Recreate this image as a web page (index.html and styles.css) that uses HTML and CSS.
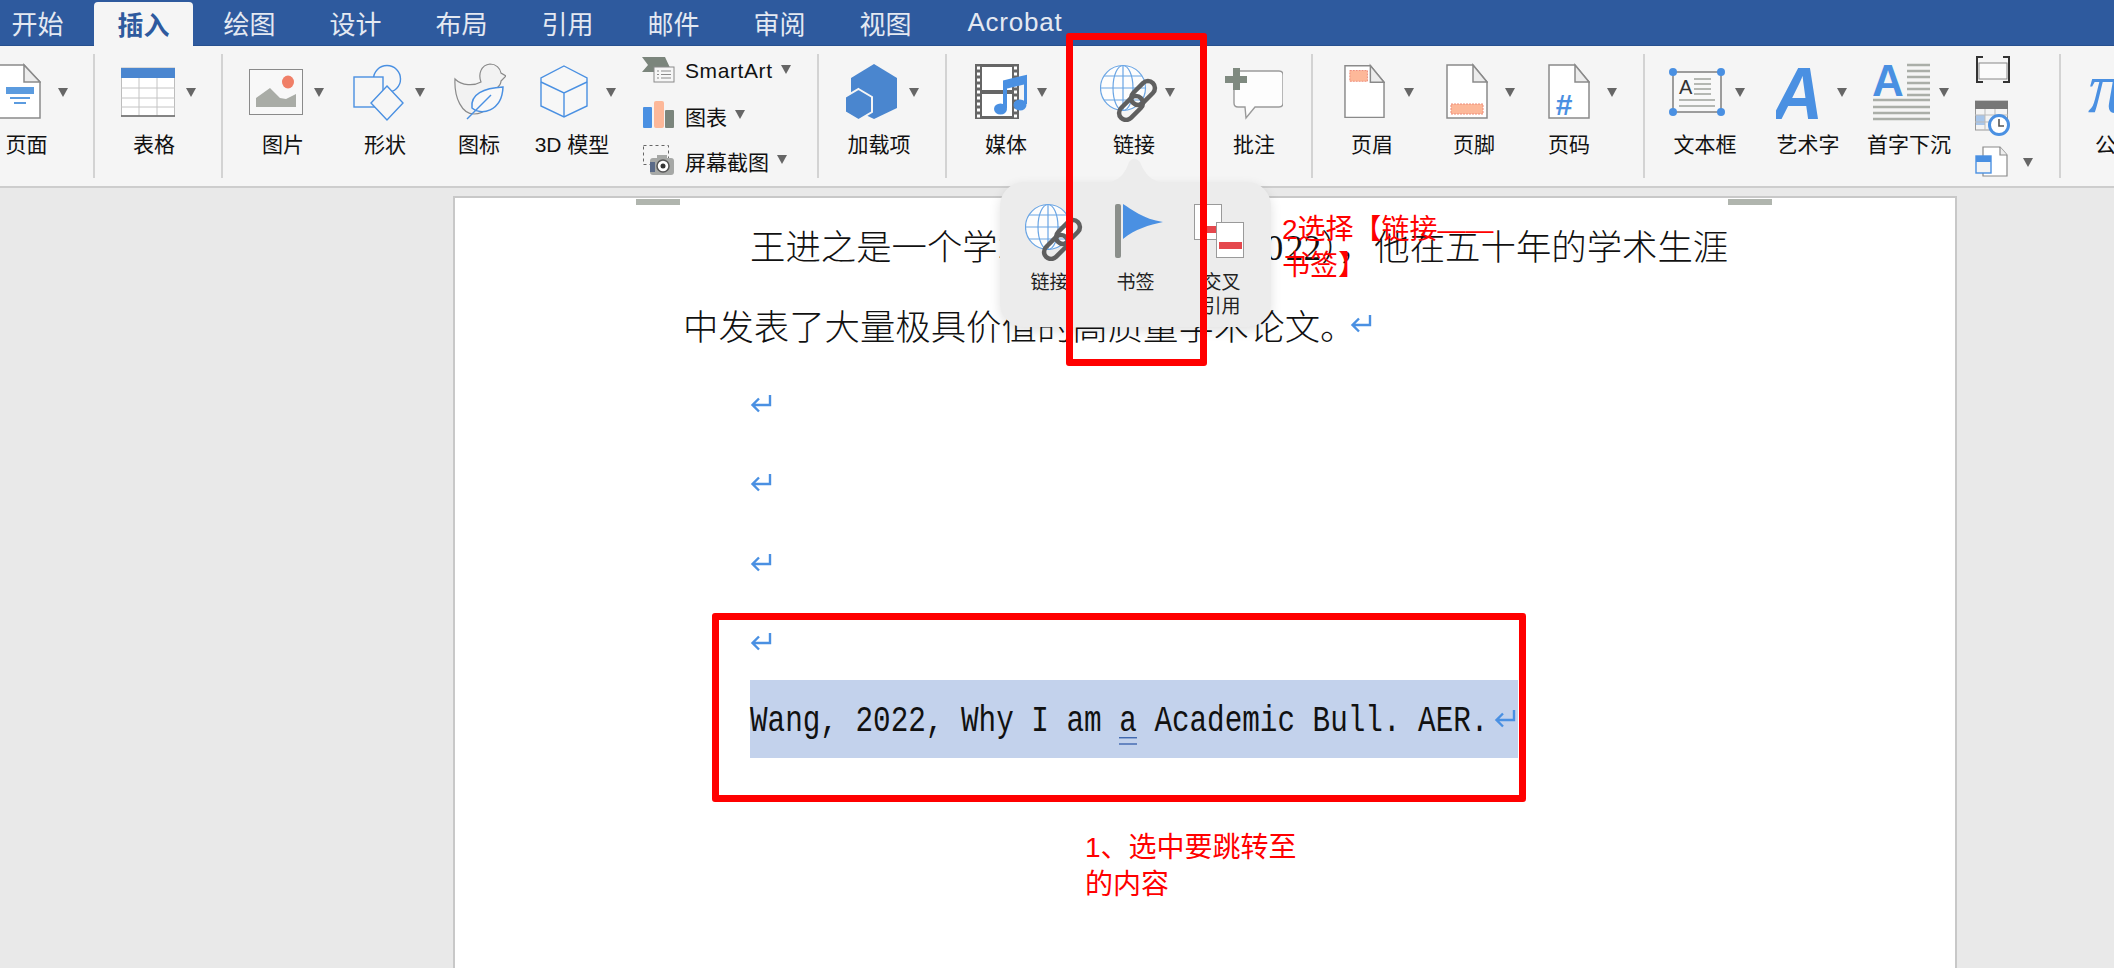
FILE: index.html
```html
<!DOCTYPE html>
<html lang="zh-CN">
<head>
<meta charset="utf-8">
<title>Word 插入 链接</title>
<link rel="stylesheet" href="styles.css">
</head>
<body>
<svg class="defs" width="0" height="0">
  <defs>
    <symbol id="ret" viewBox="0 0 22 20"><path d="M20 1V11H3M9 4.500L2.500 11L9 17.500" fill="none" stroke="#4a90e2" stroke-width="2.400"/></symbol>
    <symbol id="doc" viewBox="0 0 42 60"><path d="M1 3H27L41 20V56H1Z" fill="#fff" stroke="#8a8a8a" stroke-width="1.500"/><path d="M27 3V20H41Z" fill="#ececec" stroke="#8a8a8a" stroke-width="1.500"/></symbol>
    <symbol id="chain" viewBox="0 0 58 60"><g fill="none" stroke="#5f5f5f" stroke-width="4.500"><rect x="36" y="17" width="14" height="28" rx="7" transform="rotate(45 43 31)"/><rect x="24" y="32" width="14" height="28" rx="7" transform="rotate(45 31 46)"/></g></symbol>
    <symbol id="globe" viewBox="0 0 58 60"><g fill="#fdfdfd" stroke="#6aa5e4" stroke-width="1.200"><circle cx="23" cy="26" r="22.500"/><ellipse cx="23" cy="26" rx="10" ry="22.500"/><path d="M23 3.500V48.500M.5 26H45.500M4 14H42M4 38H42" fill="none"/></g></symbol>
  </defs>
</svg>
<div class="app">
  <nav class="tabs">
    <div class="tab">开始</div>
    <div class="tab tab-on">插入</div>
    <div class="tab">绘图</div>
    <div class="tab">设计</div>
    <div class="tab">布局</div>
    <div class="tab">引用</div>
    <div class="tab">邮件</div>
    <div class="tab">审阅</div>
    <div class="tab">视图</div>
    <div class="tab tab-wide">Acrobat</div>
  </nav>

  <section class="ribbon">
    <div class="item w133"><div class="row pl27 g17">
      <svg width="54" height="60" viewBox="0 0 54 60"><path d="M1 3H37L53 20V56H1Z" fill="#fff" stroke="#8a8a8a" stroke-width="1.500"/><path d="M37 3V20H53Z" fill="#ececec" stroke="#8a8a8a" stroke-width="1.500"/><path d="M19 25H47V32H19Z" fill="#5b9bdf"/><path d="M23 35H43V37H23ZM27 40H39V42H27Z" fill="#5b9bdf"/></svg>
      <i class="caret"></i></div><div class="label">页面</div></div>
    <i class="sep"></i>

    <div class="item w118"><div class="row pl26 g11">
      <svg width="54" height="60" viewBox="0 0 54 60"><rect x="0.500" y="6" width="53" height="48" fill="#fff" stroke="#bdbdbd"/><rect y="6" width="54" height="10" fill="#4a86d0"/><path d="M0 26H54M0 36H54M0 45H54M18 16V54M36 16V54" stroke="#c4c4c4" fill="none"/><path d="M0 54H54" stroke="#666" stroke-width="1.500"/></svg>
      <i class="caret"></i></div><div class="label">表格</div></div>
    <i class="sep ml8"></i>

    <div class="item w120"><div class="row pl26 g11">
      <svg width="54" height="60" viewBox="0 0 54 60"><rect x="0.500" y="7.500" width="53" height="45" fill="#f8f8f8" stroke="#8a8a8a"/><polygon points="7,45 7,36 21,26 31,36 37,37 47,32 47,45" fill="#a9aca6"/><ellipse cx="39" cy="20" rx="6" ry="6.500" fill="#f07f67"/></svg>
      <i class="caret"></i></div><div class="label">图片</div></div>

    <div class="item w84"><div class="row pl10 g11">
      <svg width="51" height="60" viewBox="0 0 51 60"><g fill="#f6f6f6" stroke="#4a90e2" stroke-width="1.400"><circle cx="34" cy="17" r="13.500"/><rect x="1" y="15" width="29" height="30"/><polygon points="34,24 50,41 34,58 18,41"/></g></svg>
      <i class="caret"></i></div><div class="label">形状</div></div>

    <div class="item w104"><div class="row pl27">
      <svg width="52" height="60" viewBox="0 0 52 60"><path d="M1 17C8 24 20 24 27 20C24 12 27 3 36 2C42 2 46 6 47 11L52 14L47 19C47 23 44 25 42 27C40 44 30 52 20 52C8 52 0 36 1 17Z" fill="#f2f2f2" stroke="#8a8a8a" stroke-width="1.200"/><path d="M49 25C30 26 16 32 18 46C26 54 48 50 49 25Z" fill="#f8f8f8" stroke="#4a90e2" stroke-width="1.500"/><path d="M13 57L37 33" stroke="#4a90e2" stroke-width="1.500" fill="none"/></svg>
      </div><div class="label">图标</div></div>

    <div class="item w82"><div class="row pl9 g18">
      <svg width="48" height="60" viewBox="0 0 48 60"><g fill="#f7f7f7" stroke="#4a90e2" stroke-width="1.400"><polygon points="24,4 47,16 47,44 24,55 1,44 1,16"/><path d="M1 20L24 31L47 20M24 31V55" fill="none"/></g></svg>
      <i class="caret"></i></div><div class="label">3D 模型</div></div>

    <div class="stack w204">
      <div class="srow">
        <svg width="34" height="34" viewBox="0 0 34 34"><polygon points="1,3 24,3 31,18 1,18 7,11" fill="#7b857c"/><rect x="13" y="13" width="20" height="15" fill="#f6f6f6" stroke="#8a8a8a"/><path d="M16 17H18M20 17H30M16 20.500H18M20 20.500H30M16 24H18M20 24H30" stroke="#8a8a8a" stroke-width="1.200"/></svg>
        <span class="stext stext-latin">SmartArt</span><i class="caret sc"></i>
      </div>
      <div class="srow">
        <svg width="34" height="34" viewBox="0 0 34 34"><rect x="2" y="8" width="9" height="21" rx="1" fill="#4a90e2"/><rect x="13" y="2" width="10" height="27" rx="2" fill="#fdb899"/><rect x="24" y="11" width="9" height="18" rx="1" fill="#7b857c"/></svg>
        <span class="stext">图表</span><i class="caret sc"></i>
      </div>
      <div class="srow">
        <svg width="34" height="34" viewBox="0 0 34 34"><rect x="2.500" y="1.500" width="25" height="19" fill="none" stroke="#666" stroke-dasharray="3 3"/><rect x="9" y="14" width="24" height="17" rx="3" fill="#a6a8a6"/><rect x="16" y="11" width="10" height="4" fill="#a6a8a6"/><circle cx="22" cy="22" r="6" fill="#fff" stroke="#555" stroke-width="1.500"/><circle cx="22" cy="22" r="2.500" fill="#333"/><rect x="9" y="18" width="5" height="10" fill="#5a6a88"/></svg>
        <span class="stext">屏幕截图</span><i class="caret sc"></i>
      </div>
    </div>
    <i class="sep"></i>

    <div class="item w120"><div class="row pl26 g12">
      <svg width="52" height="60" viewBox="0 0 52 60"><polygon points="29,2 52,16 52,46 29,57 6,46 6,16" fill="#4a86cf"/><polygon points="13.500,27 27,35 27,50 13.500,58 0,50 0,35" fill="#4a86cf" stroke="#f5f5f5" stroke-width="2"/></svg>
      <i class="caret"></i></div><div class="label">加载项</div></div>
    <i class="sep ml6"></i>

    <div class="item w118"><div class="row pl28 g10">
      <svg width="52" height="60" viewBox="0 0 52 60"><rect y="2" width="44" height="55" fill="#666"/><rect x="7" y="5" width="30" height="23" fill="#fff"/><rect x="7" y="32" width="30" height="22" fill="#fff"/><path d="M2 6H5M2 12H5M2 18H5M2 24H5M2 30H5M2 36H5M2 42H5M2 48H5M2 54H5M39 6H42M39 12H42M39 18H42M39 24H42M39 30H42M39 36H42M39 42H42M39 48H42M39 54H42" stroke="#fff" stroke-width="3"/><path d="M30 46V20L51 15V42" fill="none" stroke="#4a90e2" stroke-width="4"/><path d="M30 19L51 14V22L30 27Z" fill="#4a90e2"/><ellipse cx="25.500" cy="47" rx="6.500" ry="5.500" fill="#4a90e2"/><ellipse cx="45" cy="43" rx="6.500" ry="5.500" fill="#4a90e2"/></svg>
      <i class="caret"></i></div><div class="label">媒体</div></div>

    <div class="item w138"><div class="row pl35 g7">
      <svg width="58" height="60" viewBox="0 0 58 60"><use href="#globe"/><use href="#chain"/></svg>
      <i class="caret"></i></div><div class="label">链接</div></div>

    <div class="item w102"><div class="row pl22">
      <svg width="58" height="60" viewBox="0 0 58 60"><path d="M13 9H54Q58 9 58 13V41Q58 45 54 45H30L21 56L20 45H13Q9 45 9 41V13Q9 9 13 9Z" fill="#fdfdfd" stroke="#9a9a9a" stroke-width="1.400"/><path d="M8 6H15V14H22V21H15V28H8V21H0V14H8Z" fill="#7f8a80"/></svg>
      </div><div class="label">批注</div></div>
    <i class="sep ml6"></i>

    <div class="item w118"><div class="row pl31 g19">
      <svg width="41" height="60" viewBox="0 0 42 60"><use href="#doc"/><rect x="6" y="8" width="18" height="11" fill="#fdb899" stroke="#ee8c78" stroke-dasharray="2 1"/></svg>
      <i class="caret"></i></div><div class="label">页眉</div></div>

    <div class="item w86"><div class="row pl15 g17">
      <svg width="42" height="60" viewBox="0 0 42 60"><use href="#doc"/><rect x="5" y="42" width="32" height="10" fill="#fdb899" stroke="#ee8c78" stroke-dasharray="2 1"/></svg>
      <i class="caret"></i></div><div class="label">页脚</div></div>

    <div class="item w104"><div class="row pl31 g17">
      <svg width="42" height="60" viewBox="0 0 42 60"><use href="#doc"/><text x="16" y="53" class="svg-hash">#</text></svg>
      <i class="caret"></i></div><div class="label">页码</div></div>
    <i class="sep ml22"></i>

    <div class="item w120"><div class="row pl24 g9">
      <svg width="57" height="60" viewBox="0 0 57 60"><rect x="4" y="10" width="48" height="40" fill="#f8f8f8" stroke="#777" stroke-width="1.400"/><text x="10" y="32" class="svg-a">A</text><path d="M25 17H42M25 22H42M25 27H42M25 32H42M10 38H46M10 44H46" stroke="#b5b8b3" stroke-width="2"/><g fill="#4a90e2"><circle cx="4" cy="10" r="4"/><circle cx="52" cy="10" r="4"/><circle cx="4" cy="50" r="4"/><circle cx="52" cy="50" r="4"/></g></svg>
      <i class="caret"></i></div><div class="label">文本框</div></div>

    <div class="item w86"><div class="row pl11 g18">
      <svg width="43" height="60" viewBox="0 0 43 60"><text x="-3" y="57" class="svg-art" textLength="50" lengthAdjust="spacingAndGlyphs">A</text></svg>
      <i class="caret"></i></div><div class="label">艺术字</div></div>

    <div class="item w116"><div class="row pl22 g9">
      <svg width="57" height="60" viewBox="0 0 57 60"><text x="-1" y="34" class="svg-cap">A</text><path d="M34 3H57M34 9H57M34 15H57M34 21H57M34 27H57M34 33H57M0 38H57M0 45H57M0 51H57M0 57H57" stroke="#aaaea8" stroke-width="2.400"/></svg>
      <i class="caret"></i></div><div class="label">首字下沉</div></div>

    <div class="mini">
      <svg width="36" height="30" viewBox="0 0 36 30"><rect x="4" y="8" width="28" height="16" fill="#fafafa" stroke="#888"/><path d="M8 2H2V27H8M28 2H34V27H28" fill="none" stroke="#333" stroke-width="2"/></svg>
      <svg width="36" height="36" viewBox="0 0 36 36"><rect x="0.500" y="1" width="32" height="29" fill="#f4f4f4" stroke="#999"/><rect y="1" width="33" height="8" fill="#777"/><rect x="1" y="15" width="9" height="10" fill="#a8c6ea"/><path d="M0 15H33M0 22H33M10 9V30M20 9V30" stroke="#bbb"/><circle cx="24" cy="25" r="9.500" fill="#fff" stroke="#4a90e2" stroke-width="3"/><path d="M24 19V26H29" fill="none" stroke="#555" stroke-width="1.600"/></svg>
      <div class="mini-row">
        <svg width="36" height="32" viewBox="0 0 36 32"><path d="M8 1H25L32 9V30H8Z" fill="#fff" stroke="#8a8a8a" stroke-width="1.200"/><path d="M25 1V9H32" fill="#eee" stroke="#8a8a8a" stroke-width="1.200"/><rect x="1" y="10" width="15" height="17" fill="#f4f4f4" stroke="#4a90e2" stroke-width="1.400"/><rect x="1" y="10" width="15" height="6" fill="#4a90e2"/></svg>
        <i class="caret mc"></i>
      </div>
    </div>
    <i class="sep"></i>

    <div class="item w110"><div class="row pl27">
      <svg width="60" height="60" viewBox="0 0 60 60"><text x="0" y="50" class="svg-pi">π</text></svg>
      </div><div class="label">公式</div></div>
  </section>

  <main class="canvas">
    <article class="page">
      <i class="crop crop-l"></i><i class="crop crop-r"></i>
      <p class="line indent">王进之是一个学<span class="covered">术大牛（1938-20</span>22），他在五十年的学术生涯</p>
      <p class="line">中发表了大量极具价值的高质量学术论文。<svg class="ret ret-a"><use href="#ret"/></svg></p>
      <p class="line indent"><svg class="ret"><use href="#ret"/></svg></p>
      <p class="line indent"><svg class="ret"><use href="#ret"/></svg></p>
      <p class="line indent"><svg class="ret"><use href="#ret"/></svg></p>
      <p class="line indent"><svg class="ret"><use href="#ret"/></svg></p>
      <p class="selected"><span class="mono">Wang, 2022, Why I am <span class="dbl">a</span> Academic Bull. AER.</span><svg class="ret ret-b"><use href="#ret"/></svg></p>
    </article>
  </main>

  <aside class="pop">
    <svg class="pop-arrow" width="70" height="27" viewBox="0 0 70 27"><path d="M0 26C16 26 24 20 29 5Q34 -2 40 5C46 20 54 26 70 26V27H0Z" fill="#ececec"/></svg>
    <div class="pop-item">
      <svg class="pop-globe" width="58" height="60" viewBox="0 0 58 60"><use href="#globe"/><use href="#chain"/></svg>
      <span>链接</span>
    </div>
    <div class="pop-item">
      <svg width="58" height="60" viewBox="0 0 58 60"><rect x="8" y="3" width="6" height="54" rx="2" fill="#8b8f8b"/><path d="M16 3C24 8 36 18 56 21C42 24 28 28 16 38Z" fill="#4a90e2"/></svg>
      <span>书签</span>
    </div>
    <div class="pop-item">
      <svg width="58" height="60" viewBox="0 0 58 60"><rect x="1.500" y="3.500" width="27" height="35" fill="#fff" stroke="#9a9a9a"/><rect x="8" y="25" width="20" height="7" fill="#e5484d"/><rect x="23.500" y="21.500" width="27" height="35" fill="#fff" stroke="#9a9a9a"/><rect x="26" y="41" width="23" height="7" fill="#e5484d"/></svg>
      <span>交叉<br>引用</span>
    </div>
  </aside>

  <div class="redbox redbox-link"></div>
  <div class="redbox redbox-sel"></div>
  <div class="note note-2">2选择【链接——<br>书签】</div>
  <div class="note note-1">1、选中要跳转至<br>的内容</div>
</div>
</body>
</html>
```
FILE: styles.css
```css
* { box-sizing: border-box; }
html, body { margin: 0; padding: 0; background: #e9e9e9; }
.defs { position: absolute; }
.app {
  position: relative;
  width: 2114px;
  height: 968px;
  overflow: hidden;
  display: flex;
  flex-direction: column;
  font-family: "Liberation Sans", "Noto Sans CJK SC", sans-serif;
  color: #111;
}

/* title tabs */
.tabs {
  display: flex;
  flex: none;
  gap: 7px;
  height: 46px;
  padding-top: 2px;
  margin-left: -12px;
  width: 2126px;
  background: #2e5a9e;
  border-bottom: 1px solid #27508f;
}
.tab {
  width: 99px;
  height: 44px;
  padding-bottom: 3px;
  display: flex;
  align-items: center;
  justify-content: center;
  font-size: 26px;
  color: #e4e9f2;
}
.tab-on {
  height: 45px;
  background: #f5f5f5;
  color: #2e5a9e;
  border-radius: 4px 4px 0 0;
  font-weight: 700;
}
.tab-wide { width: 146px; letter-spacing: 0.8px; }

/* ribbon */
.ribbon {
  display: flex;
  flex: none;
  height: 142px;
  margin-left: -40px;
  width: 2154px;
  background: #f5f5f5;
  border-bottom: 2px solid #cdcdcd;
  overflow: hidden;
}
.item { flex: none; padding-top: 16px; }
.row { display: flex; align-items: center; height: 60px; }
.row svg { flex: none; }
.label {
  margin-top: 9px;
  line-height: 28px;
  font-size: 21px;
  text-align: center;
  white-space: nowrap;
}
.caret {
  flex: none;
  width: 0;
  height: 0;
  border-left: 5px solid transparent;
  border-right: 5px solid transparent;
  border-top: 9px solid #666;
}
.sep {
  flex: none;
  width: 2px;
  height: 124px;
  margin-top: 8px;
  background: #d3d3d3;
}
.w82 { width: 82px; } .w84 { width: 84px; } .w86 { width: 86px; }
.w102 { width: 102px; } .w104 { width: 104px; } .w110 { width: 110px; }
.w116 { width: 116px; } .w118 { width: 118px; } .w120 { width: 120px; }
.w133 { width: 133px; } .w138 { width: 138px; } .w204 { width: 204px; }
.pl9 { padding-left: 9px; } .pl10 { padding-left: 10px; } .pl11 { padding-left: 11px; }
.pl15 { padding-left: 15px; } .pl22 { padding-left: 22px; } .pl24 { padding-left: 24px; }
.pl26 { padding-left: 26px; } .pl27 { padding-left: 27px; } .pl28 { padding-left: 28px; }
.pl31 { padding-left: 31px; } .pl35 { padding-left: 35px; }
.g7 { gap: 7px; } .g9 { gap: 9px; } .g10 { gap: 10px; } .g11 { gap: 11px; }
.g12 { gap: 12px; } .g17 { gap: 17px; } .g18 { gap: 18px; } .g19 { gap: 19px; }
.ml6 { margin-left: 6px; } .ml8 { margin-left: 8px; } .ml22 { margin-left: 22px; }

.stack { flex: none; padding: 2px 0 0 28px; }
.srow { display: flex; align-items: center; height: 45px; }
.stext { margin-left: 10px; font-size: 21px; white-space: nowrap; }
.stext-latin { letter-spacing: 0.6px; }
.sc { margin: -3px 0 0 8px; }

.mini {
  flex: none;
  width: 92px;
  padding: 9px 0 0 8px;
  display: flex;
  flex-direction: column;
  gap: 15px;
}
.mini svg { display: block; flex: none; }
.mini-row { display: flex; align-items: center; margin-top: -5px; gap: 12px; }

.svg-hash { font: 700 30px "Liberation Sans", sans-serif; fill: #4a90e2; text-anchor: middle; }
.svg-a { font: 400 20px "Liberation Sans", sans-serif; fill: #333; }
.svg-art { font: italic 700 74px "Liberation Sans", sans-serif; fill: #4a90e2; }
.svg-cap { font: 700 44px "Liberation Sans", sans-serif; fill: #4a90e2; }
.svg-pi { font: italic 400 72px "Liberation Serif", serif; fill: #4a90e2; }

/* document */
.canvas {
  flex: 1;
  padding: 8px 0 0 453px;
  background: #e9e9e9;
  overflow: hidden;
}
.page {
  position: relative;
  width: 1504px;
  height: 900px;
  padding: 7px 0 0 228px;
  background: #fff;
  border: 2px solid #c8c8c8;
  border-bottom: 0;
  font-family: "Liberation Serif", "Noto Sans CJK SC", serif;
  font-size: 35.400px;
  font-weight: 300;
  color: #111;
}
.crop { position: absolute; top: 1px; width: 44px; height: 6px; background: #b0b5ae; }
.crop-l { left: 181px; }
.crop-r { left: 1273px; }
.line {
  display: flex;
  align-items: center;
  height: 79.500px;
  margin: 0;
  white-space: pre;
}
.covered { letter-spacing: 2.600px; }
.indent { padding-left: 67px; }
.ret { width: 22px; height: 20px; flex: none; }
.ret-a { margin-left: -5px; }
.ret-b { margin-left: 6px; }
.selected {
  display: flex;
  align-items: center;
  width: 768px;
  height: 78px;
  margin: -2px 0 0 67px;
  background: #c3d2ec;
}
.mono {
  display: inline-block;
  font-family: "Liberation Mono", monospace;
  font-size: 29.300px;
  font-weight: 400;
  white-space: pre;
  color: #111;
  transform: translateY(2px) scaleY(1.25);
}
.dbl { position: relative; }
.dbl::after {
  content: "";
  position: absolute;
  left: 0;
  right: 0;
  bottom: -2px;
  height: 4px;
  border-top: 1px solid #2f5aa8;
  border-bottom: 1px solid #2f5aa8;
}

/* popover */
.pop {
  position: absolute;
  left: 1000px;
  top: 182px;
  width: 271px;
  height: 145px;
  display: flex;
  justify-content: center;
  padding-top: 19px;
  background: #ececec;
  border-radius: 24px;
  box-shadow: 0 4px 12px rgba(0, 0, 0, 0.12);
  font-family: "Liberation Sans", "Noto Sans CJK SC", sans-serif;
  font-size: 19px;
  line-height: 24px;
  color: #222;
}
.pop-arrow { position: absolute; left: 100px; top: -25px; }
.pop-item {
  width: 86px;
  display: flex;
  flex-direction: column;
  align-items: center;
  text-align: center;
}
.pop-item svg { flex: none; }
.pop-item .pop-globe { margin-left: 8px; }
.pop-item span { margin-top: 10px; }

/* annotations */
.redbox { position: absolute; border: 7px solid #f00; border-radius: 3px; }
.redbox-link { left: 1066px; top: 33px; width: 141px; height: 333px; }
.redbox-sel { left: 712px; top: 613px; width: 814px; height: 189px; }
.note {
  position: absolute;
  font-family: "Liberation Sans", "Noto Sans CJK SC", sans-serif;
  color: #f00;
  font-size: 28px;
  white-space: nowrap;
}
.note-2 { left: 1282px; top: 212px; line-height: 36px; }
.note-1 { left: 1085px; top: 829px; line-height: 37px; }
```
